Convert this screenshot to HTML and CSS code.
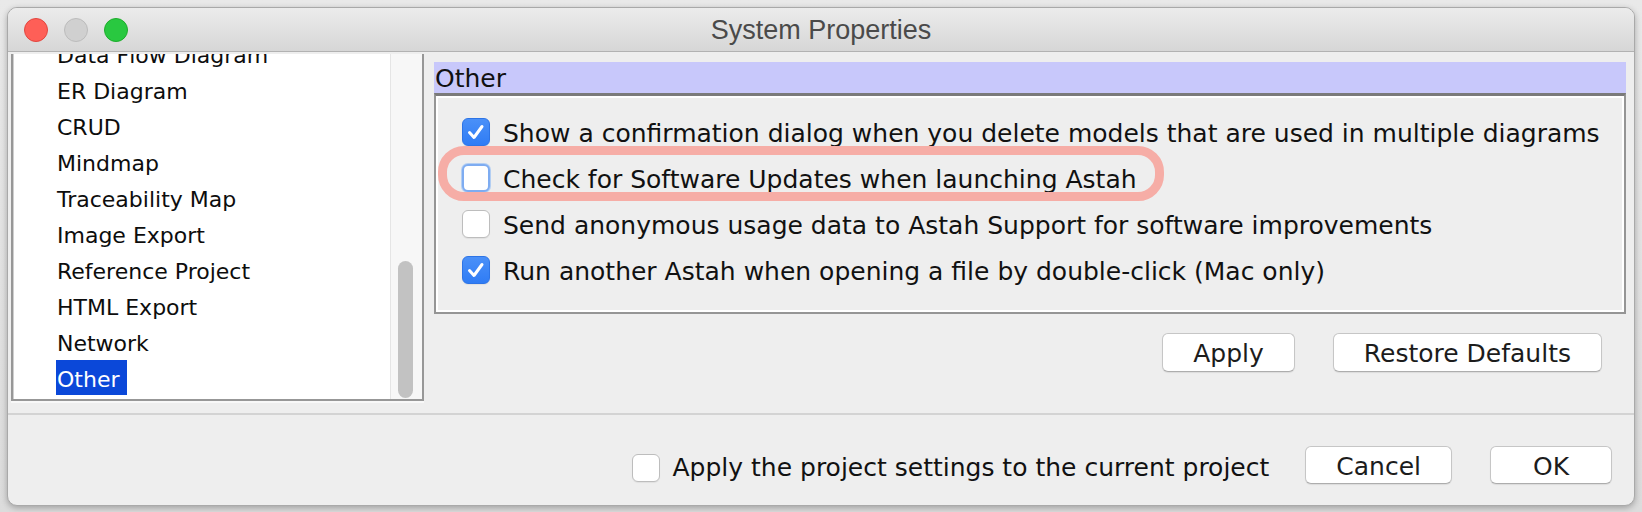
FILE: index.html
```html
<!DOCTYPE html>
<html>
<head>
<meta charset="utf-8">
<title>System Properties</title>
<link rel="stylesheet" href="styles.css">
</head>
<body>
<div class="window">
  <div class="titlebar">
    <div class="lights">
      <span class="light red"></span>
      <span class="light gray"></span>
      <span class="light green"></span>
    </div>
    <div class="title">System Properties</div>
    <div></div>
  </div>
  <div class="top">
    <div class="list">
      <div class="list-content">
        <div class="items">
          <div class="item"><span class="label">Data Flow Diagram</span></div>
          <div class="item"><span class="label">ER Diagram</span></div>
          <div class="item"><span class="label">CRUD</span></div>
          <div class="item"><span class="label">Mindmap</span></div>
          <div class="item"><span class="label">Traceability Map</span></div>
          <div class="item"><span class="label">Image Export</span></div>
          <div class="item"><span class="label">Reference Project</span></div>
          <div class="item"><span class="label">HTML Export</span></div>
          <div class="item"><span class="label">Network</span></div>
          <div class="item"><span class="label selected">Other</span></div>
        </div>
      </div>
      <div class="scroll"><div class="thumb"></div></div>
    </div>
    <div class="panel">
      <div class="panel-header">Other</div>
      <div class="panel-box">
        <div class="opt">
          <span class="cb checked"><svg viewBox="0 0 28 28" width="28" height="28"><path d="M7.5 14.5 L12 19.5 L20 8.5" fill="none" stroke="#fff" stroke-width="3" stroke-linecap="round" stroke-linejoin="round"/></svg></span>
          <span class="opt-text">Show a confirmation dialog when you delete models that are used in multiple diagrams</span>
        </div>
        <div class="opt">
          <span class="cb focused"></span>
          <span class="opt-text">Check for Software Updates when launching Astah</span>
        </div>
        <div class="opt">
          <span class="cb"></span>
          <span class="opt-text">Send anonymous usage data to Astah Support for software improvements</span>
        </div>
        <div class="opt">
          <span class="cb checked"><svg viewBox="0 0 28 28" width="28" height="28"><path d="M7.5 14.5 L12 19.5 L20 8.5" fill="none" stroke="#fff" stroke-width="3" stroke-linecap="round" stroke-linejoin="round"/></svg></span>
          <span class="opt-text">Run another Astah when opening a file by double-click (Mac only)</span>
        </div>
        <div class="ring"></div>
      </div>
      <div class="buttons">
        <button class="btn">Apply</button>
        <button class="btn">Restore Defaults</button>
      </div>
    </div>
  </div>
  <div class="sep"></div>
  <div class="bottom">
    <span class="cb"></span>
    <span class="bottom-text">Apply the project settings to the current project</span>
    <button class="btn">Cancel</button>
    <button class="btn">OK</button>
  </div>
</div>
</body>
</html>
```

FILE: styles.css
```css
html, body {
  margin: 0;
  padding: 0;
}
body {
  width: 1642px;
  height: 512px;
  overflow: hidden;
  background: linear-gradient(#e9e9e9, #dcdcdc);
  font-family: "DejaVu Sans", sans-serif;
  color: #111;
}
.window {
  margin: 7px 0 0 7px;
  width: 1628px;
  height: 499px;
  box-sizing: border-box;
  border: 1px solid #a9a9a9;
  border-radius: 10px;
  background: #eeeeee;
  overflow: hidden;
  box-shadow: 0 2px 6px rgba(0, 0, 0, 0.28);
  display: flex;
  flex-direction: column;
}
.titlebar {
  height: 44px;
  box-sizing: border-box;
  border-bottom: 1px solid #b2b2b2;
  background: linear-gradient(#ececec, #d6d6d6);
  display: grid;
  grid-template-columns: 1fr auto 1fr;
  align-items: center;
  flex: none;
}
.lights {
  display: flex;
  gap: 16px;
  padding-left: 16px;
}
.light {
  width: 24px;
  height: 24px;
  box-sizing: border-box;
  border-radius: 50%;
  display: block;
}
.light.red { background: #fe5f57; border: 1px solid #e2463f; }
.light.gray { background: #d0d0d0; border: 1px solid #bcbcbc; }
.light.green { background: #29c840; border: 1px solid #1dad2b; }
.title {
  font-family: "Liberation Sans", Arial, sans-serif;
  font-size: 27px;
  color: #4a4a4a;
  padding-top: 2px;
}
.top {
  height: 361px;
  display: flex;
  align-items: flex-start;
  flex: none;
}
.list {
  margin: 2px 0 0 3px;
  width: 413px;
  height: 347px;
  box-sizing: border-box;
  border: 2px solid #979797;
  border-top: none;
  background: #fff;
  display: flex;
  box-shadow: 0 2px 0 #f8f8f8;
}
.list-content {
  flex: 1;
  overflow: hidden;
  box-shadow: inset 1px 0 0 #cfcfcf;
}
.items {
  margin-top: -18px;
  font-size: 22px;
  color: #0d0d0d;
}
.item {
  height: 36px;
  padding-left: 43px;
}
.label {
  display: inline-block;
  line-height: 26px;
  padding: 7px 8px 2px 1px;
  white-space: nowrap;
}
.label.selected {
  background: #0b48d9;
  color: #fff;
}
.scroll {
  width: 32px;
  box-sizing: border-box;
  background: #f7f7f7;
  border-left: 1px solid #e5e5e5;
  display: flex;
  flex-direction: column;
  justify-content: flex-end;
  padding: 0 0 1px 7px;
}
.thumb {
  width: 15px;
  height: 137px;
  border-radius: 8px;
  background: #c2c2c2;
}
.panel {
  margin-left: 10px;
  width: 1192px;
  padding-top: 10px;
}
.panel-header {
  height: 31px;
  box-sizing: border-box;
  background: #c8c8fb;
  font-size: 25px;
  line-height: 28px;
  padding: 3px 0 0 1px;
}
.panel-box {
  position: relative;
  box-sizing: border-box;
  border: 2px solid #959595;
  border-top: 3px solid #7a7a7a;
  box-shadow: inset 0 0 0 2px #fff;
  padding: 13px 0 19px 26px;
}
.opt {
  height: 46px;
  display: flex;
  align-items: center;
}
.opt-text {
  font-size: 25px;
  padding-top: 2px;
  white-space: nowrap;
}
.cb {
  width: 28px;
  height: 28px;
  box-sizing: border-box;
  border-radius: 6px;
  background: #fff;
  border: 1px solid #bdbdbd;
  box-shadow: 0 1px 1px rgba(0, 0, 0, 0.06);
  margin-right: 13px;
  flex: none;
  display: block;
}
.cb svg { display: block; margin: -1px; }
.cb.checked {
  background: linear-gradient(#4a90f8, #2f7cf5);
  border: 1px solid #2d74e6;
}
.cb.focused {
  border: 2px solid #7eacf1;
  box-shadow: 0 0 0 1px rgba(140, 185, 245, 0.6);
}
.ring {
  position: absolute;
  left: 2px;
  top: 50px;
  width: 726px;
  height: 55px;
  box-sizing: border-box;
  border: 9px solid #f6ada6;
  border-radius: 26px;
  pointer-events: none;
}
.buttons {
  display: flex;
  justify-content: flex-end;
  gap: 38px;
  margin-top: 19px;
  padding-right: 24px;
}
.btn {
  font-family: "DejaVu Sans", sans-serif;
  font-size: 25px;
  color: #1c1c1c;
  height: 39px;
  min-width: 122px;
  box-sizing: border-box;
  padding: 2px 30px 0;
  background: #fff;
  border: 1px solid #c6c6c6;
  border-bottom-color: #adadad;
  border-radius: 6px;
  box-shadow: 0 1px 1px rgba(0, 0, 0, 0.08);
  line-height: 1;
}
.sep {
  height: 2px;
  background: #d3d3d3;
  flex: none;
}
.bottom {
  flex: 1;
  display: flex;
  justify-content: flex-end;
  align-items: flex-start;
  padding: 31px 22px 0 0;
  box-sizing: border-box;
}
.bottom .cb {
  margin-top: 8px;
}
.bottom-text {
  font-size: 25px;
  line-height: 38px;
  padding-top: 3px;
  margin-right: 36px;
  white-space: nowrap;
}
.bottom .btn {
  height: 38px;
  padding-top: 3px;
}
.bottom .btn + .btn {
  margin-left: 38px;
}
```
